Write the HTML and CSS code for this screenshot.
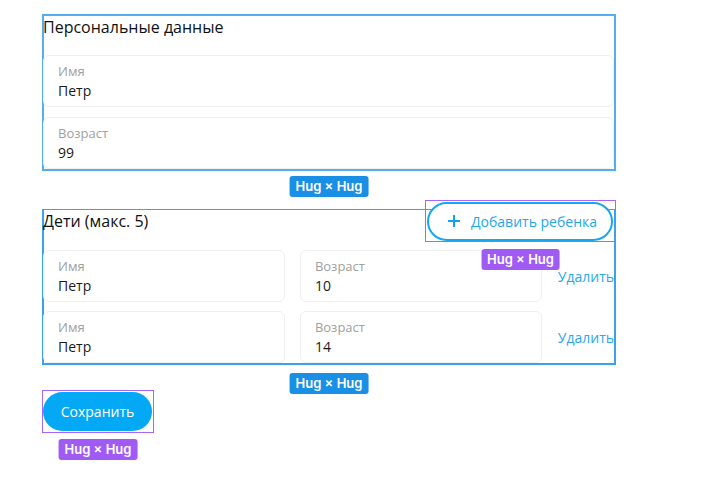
FILE: index.html
```html
<!DOCTYPE html>
<html lang="ru">
<head>
<meta charset="utf-8">
<link rel="stylesheet" href="styles.css">
</head>
<body>
<div class="page">
  <section class="frame frame-personal">
    <h2 class="frame-title">Персональные данные</h2>
    <div class="stack">
      <div class="field">
        <span class="field-label">Имя</span>
        <span class="field-value">Петр</span>
      </div>
      <div class="field">
        <span class="field-label">Возраст</span>
        <span class="field-value">99</span>
      </div>
    </div>
    <span class="badge badge-blue badge-center badge-p">Hug × Hug</span>
  </section>

  <section class="frame frame-children">
    <div class="children-head">
      <h2 class="frame-title">Дети (макс. 5)</h2>
      <div class="selected selected-add">
        <button class="btn-outline" type="button">
          <svg class="plus" width="12" height="12" viewBox="0 0 12 12"><path d="M6 0v12M0 6h12" stroke="currentColor" stroke-width="2" fill="none"/></svg>
          <span>Добавить ребенка</span>
        </button>
        <span class="badge badge-purple badge-center">Hug × Hug</span>
      </div>
    </div>
    <div class="stack stack-children">
      <div class="child-row">
        <div class="field">
          <span class="field-label">Имя</span>
          <span class="field-value">Петр</span>
        </div>
        <div class="field">
          <span class="field-label">Возраст</span>
          <span class="field-value">10</span>
        </div>
        <a class="link-delete" href="#">Удалить</a>
      </div>
      <div class="child-row">
        <div class="field">
          <span class="field-label">Имя</span>
          <span class="field-value">Петр</span>
        </div>
        <div class="field">
          <span class="field-label">Возраст</span>
          <span class="field-value">14</span>
        </div>
        <a class="link-delete" href="#">Удалить</a>
      </div>
    </div>
    <span class="badge badge-blue badge-center badge-c">Hug × Hug</span>
  </section>

  <div class="save-wrap">
    <div class="selected selected-save">
      <button class="btn-primary" type="button">Сохранить</button>
      <span class="badge badge-purple badge-center">Hug × Hug</span>
    </div>
  </div>
</div>
</body>
</html>
```

FILE: styles.css
```css
* { box-sizing: border-box; }

html, body {
  margin: 0;
  padding: 0;
  background: #ffffff;
}

body {
  font-family: "Open Sans", "Noto Sans", sans-serif;
  color: #1f1f1f;
  min-height: 477px;
}

.page {
  padding: 14px 0 40px 42px;
  width: 700px;
  display: flex;
  flex-direction: column;
  align-items: flex-start;
}

.frame {
  position: relative;
  width: 574px;
  border: 2px solid #52aef0;
  display: flex;
  flex-direction: column;
}

.frame-children {
  margin-top: 38px;
  border-color: #3aa1ec;
  border-top-width: 1px;
}

.frame-title {
  margin: 0 0 0 -1px;
  font-size: 16px;
  font-weight: 400;
  line-height: 22px;
  color: #111;
}

.frame-personal .frame-title {
  margin-bottom: 17px;
}

.stack {
  display: flex;
  flex-direction: column;
  gap: 10px;
}

.stack-children { gap: 9px; }

.field {
  flex: 1;
  display: flex;
  flex-direction: column;
  gap: 2px;
  padding: 7px 14px 5px;
  border: 1px solid #efefef;
  border-radius: 6px;
  margin-left: -1px;
  height: 52px;
}

.field-label {
  font-size: 13px;
  line-height: 16px;
  color: #a0a0a0;
}

.field-value {
  font-size: 14px;
  line-height: 20px;
  color: #1a1a1a;
}

.children-head {
  display: flex;
  align-items: center;
  justify-content: space-between;
  margin-top: -11px;
  margin-bottom: 8px;
  height: 43px;
}

.selected {
  position: relative;
  border: 1px solid #a866f6;
}

.selected-add {
  padding: 1px 2px 0 1px;
  margin-right: -2px;
}

.btn-outline {
  display: flex;
  align-items: center;
  gap: 11px;
  height: 39px;
  width: 186px;
  padding: 0 0 0 19px;
  border: 2px solid #17a6f4;
  border-radius: 20px;
  background: #fff;
  color: #22a7ef;
  font-family: inherit;
  font-size: 14px;
  cursor: pointer;
}

.plus {
  color: #10a2f2;
  flex: none;
}

.child-row {
  display: flex;
  align-items: center;
  gap: 16px;
}

.link-delete {
  flex: none;
  font-size: 14px;
  color: #29a8ef;
  text-decoration: none;
}

.save-wrap {
  margin-top: 25px;
  display: flex;
}

.selected-save {
  padding: 1px 1px 1px 0;
}

.btn-primary {
  display: block;
  height: 39px;
  width: 109px;
  border: 0;
  border-radius: 20px;
  background: #03a9f4;
  color: #fff;
  font-family: inherit;
  font-size: 14px;
  cursor: pointer;
}

.badge {
  position: absolute;
  top: calc(100% + 8px);
  height: 21px;
  padding: 0 6px;
  border-radius: 3px;
  font-family: "Inter", sans-serif;
  font-weight: 600;
  font-size: 13px;
  line-height: 21px;
  color: #fff;
  white-space: nowrap;
}

.badge-center {
  left: 50%;
  transform: translateX(-50%);
}

.badge-blue { background: #1a8fe6; }
.badge-p { top: calc(100% + 7px); }
.badge-c { top: calc(100% + 10px); }

.badge-purple {
  background: #a05bf5;
  top: calc(100% + 8px);
  height: 21px;
  line-height: 21px;
}

.selected-save .badge-purple { top: calc(100% + 7px); }
```
